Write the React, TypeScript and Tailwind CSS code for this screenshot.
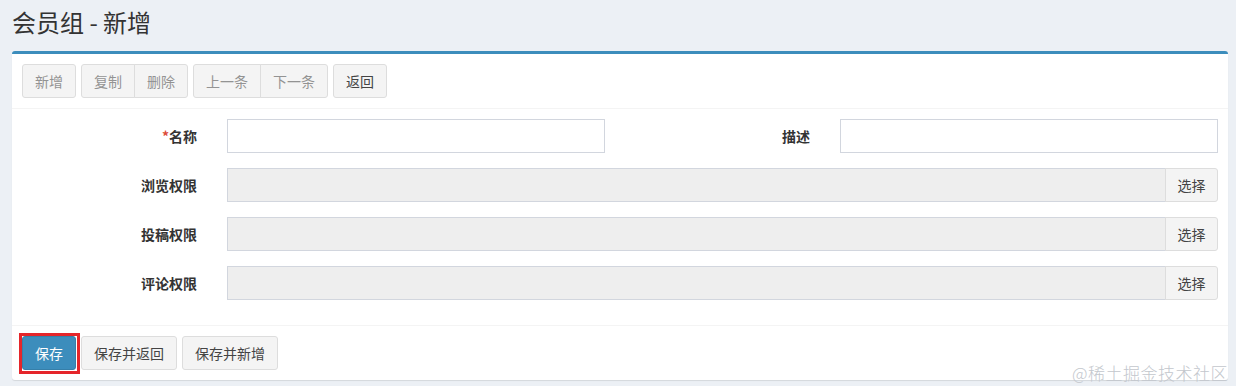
import React from 'react';

const font = '"Noto Sans CJK SC", "Liberation Sans", sans-serif';

const ToolBtn: React.FC<{ label: string; disabled?: boolean; className?: string }> = ({ label, disabled, className = '' }) => (
  <button
    className={`h-[34px] px-[12px] border border-[#ddd] bg-[#f4f4f4] text-[14px] ${disabled ? 'text-[#939393]' : 'text-[#444]'} ${className}`}
  >
    {label}
  </button>
);

const PickRow: React.FC<{ label: string }> = ({ label }) => (
  <>
    <div className="text-right text-[14px] font-bold text-[#333]">{label}</div>
    <div className="col-span-3 flex h-[34px]">
      <div className="flex-1 border border-[#d2d6de] bg-[#eee]" />
      <button className="w-[53px] -ml-px border border-[#ddd] bg-[#f4f4f4] text-[14px] text-[#444] rounded-r-[3px]">选择</button>
    </div>
  </>
);

export default function App() {
  return (
    <div className="min-h-[386px] bg-[#ecf0f5] relative" style={{ fontFamily: font }}>
      <div className="px-[12px] pt-[7px] h-[51px]">
        <h1 className="text-[24px] leading-[30px] text-[#333]">会员组 - 新增</h1>
      </div>
      <div className="ml-[12px] w-[1216px] bg-white border-t-[3px] border-[#3c8dbc] rounded-[3px] shadow-[0_1px_1px_rgba(0,0,0,0.1)]">
        {/* toolbar */}
        <div className="flex gap-[5px] p-[10px] border-b border-[#f4f4f4]">
          <ToolBtn label="新增" disabled className="rounded-[3px]" />
          <div className="flex">
            <ToolBtn label="复制" disabled className="rounded-l-[3px]" />
            <ToolBtn label="删除" disabled className="-ml-px rounded-r-[3px]" />
          </div>
          <div className="flex">
            <ToolBtn label="上一条" disabled className="rounded-l-[3px]" />
            <ToolBtn label="下一条" disabled className="-ml-px rounded-r-[3px]" />
          </div>
          <ToolBtn label="返回" className="rounded-[3px]" />
        </div>

        {/* form */}
        <div className="px-[10px] pt-[10px] pb-[25px] grid grid-cols-[175px_378px_175px_378px] gap-x-[30px] gap-y-[15px] items-center">
          <div className="text-right text-[14px] font-bold text-[#333]">
            <span className="text-[#dd4b39]">*</span>名称
          </div>
          <div className="h-[34px] border border-[#d2d6de] bg-white" />
          <div className="text-right text-[14px] font-bold text-[#333]">描述</div>
          <div className="h-[34px] border border-[#d2d6de] bg-white" />

          <PickRow label="浏览权限" />
          <PickRow label="投稿权限" />
          <PickRow label="评论权限" />
        </div>

        {/* footer */}
        <div className="flex gap-[5px] p-[10px] border-t border-[#f4f4f4]">
          <div className="relative">
            <button className="h-[34px] px-[12px] bg-[#3c8dbc] border border-[#367fa9] text-white text-[14px] rounded-[3px]">
              保存
            </button>
            <span className="absolute -left-[3px] -right-[4px] -top-[3px] -bottom-[4px] border-[3px] border-[#e5252a] pointer-events-none" />
          </div>
          <ToolBtn label="保存并返回" className="rounded-[3px]" />
          <ToolBtn label="保存并新增" className="rounded-[3px]" />
        </div>
      </div>
      <div className="absolute right-[8px] bottom-[3px] text-[17px] leading-[20px] text-[#c3c7cd] font-light tracking-[0.5px]">
        @稀土掘金技术社区
      </div>
    </div>
  );
}
